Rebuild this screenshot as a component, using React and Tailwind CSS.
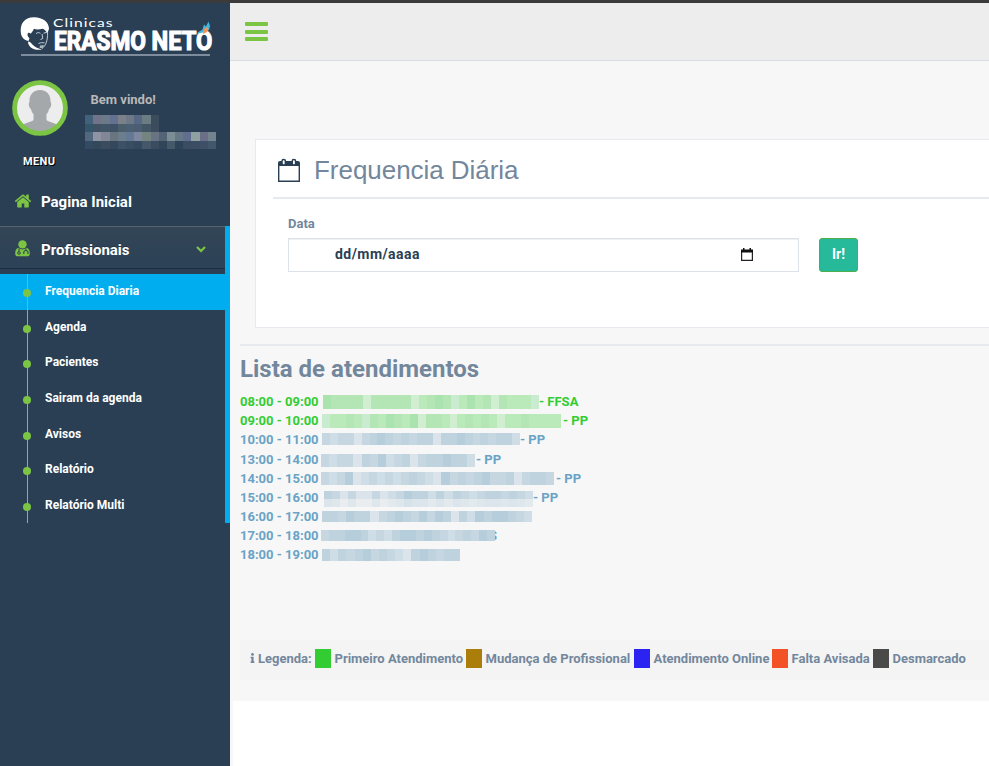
import React from "react";
import { FaInfo } from "react-icons/fa";

const MENU = [
  { label: "Frequencia Diaria", active: true, h: "h-9" },
  { label: "Agenda", h: "h-[35px]" },
  { label: "Pacientes", h: "h-9" },
  { label: "Sairam da agenda", h: "h-9" },
  { label: "Avisos", h: "h-[35px]" },
  { label: "Relatório", h: "h-9" },
  { label: "Relatório Multi", h: "h-[35px]" },
];

// Mosaic shades, light to dark; each row lists its cells as indexes into them.
const GREENS = ["#d2eed0", "#c9ecd0", "#bae9ba", "#b4e6b5", "#abe3ae"];
const BLUES = ["#dbe4ea", "#cfdee6", "#c6d7e1", "#bfd3df", "#b6cedb"];

const ROWS = [
  { time: "08:00 - 09:00", green: true, h: "h-[19px]", bar: "ml-[5px] mt-[3px] w-[216px] h-[14px]", cells: "433330333330234312423032221", end: "- FFSA", gap: "" },
  { time: "09:00 - 10:00", green: true, h: "h-[19px]", bar: "ml-1 mt-[3px] w-[239px] h-[14px]", cells: "122321324324033202323202232222", end: "- PP", gap: "pl-[2px]" },
  { time: "10:00 - 11:00", h: "h-5", bar: "ml-1 mt-[3px] w-[198px] h-3", cells: "2122023432323303343232331", end: "- PP", gap: "" },
  { time: "13:00 - 14:00", h: "h-[19px]", bar: "ml-[3px] mt-1 w-[154px] h-[13px]", cells: "2122032412302334331", end: "- PP", gap: "pl-[1px]" },
  { time: "14:00 - 15:00", h: "h-[19px]", bar: "ml-[3px] mt-[3px] w-[233px] h-[13px]", cells: "21240121212321042323422302332", end: "- PP", gap: "pl-[2px]" },
  { time: "15:00 - 16:00", h: "h-[19px]", bar: "ml-[6px] mt-[3px] w-[209px] h-4", cells: "32020020124331313212332321", end: "- PP", gap: "", double: true },
  { time: "16:00 - 17:00", h: "h-[19px]", bar: "ml-1 mt-1 w-[210px] h-[11px]", cells: "33243302343242430314344321" },
  { time: "17:00 - 18:00", h: "h-[19px]", bar: "ml-[3px] mt-1 w-[174px] h-[11px]", cells: "2334431213443432123243", tail: true },
  { time: "18:00 - 19:00", h: "h-[19px]", bar: "ml-1 mt-1 w-[138px] h-3", cells: "31323423210343233" },
];

const USER_MOSAIC = [
  { h: "h-[9px]", c: ["#41627a", "#717488", "#6b7a89", "#637191", "#7b8089", "#6d7986", "#576885", "#6b7c84", "#3b4c5d"] },
  { h: "h-2", c: ["#34556a", "#3f5163", "#415569", "#405166", "#4b5e6c", "#4c6073", "#4b5d73", "#435666", "#3c4c5e"] },
  { h: "h-[9px]", c: ["#52687e", "#8e94a3", "#828797", "#69757f", "#6c7d8b", "#667994", "#7d88a0", "#74847f", "#687384", "#536477", "#7d8d95", "#677887", "#626e8f", "#90a1a2", "#6b6f87", "#74848f"] },
  { h: "h-2", c: ["#324a62", "#34485c", "#3a4c5e", "#34475b", "#3c5066", "#384c62", "#34485f", "#44586a", "#3a4c60", "#30455a", "#445a6a", "#2d4358", "#394c62", "#3b4d62", "#3e5067", "#42566c"] },
];

const LEGEND = [
  ["bg-[#32cd32]", "Primeiro Atendimento", "w-[129px]"],
  ["bg-[#ab7e0b]", "Mudança de Profissional", "w-[146px]"],
  ["bg-[#2a23f1]", "Atendimento Online", "w-[116px]"],
  ["bg-[#f25226]", "Falta Avisada", "w-[79px]"],
  ["bg-[#4a4a48]", "Desmarcado", "w-[74px]"],
];

function Logo() {
  return (
    <svg width="230" height="60" viewBox="0 3 230 60" className="block shrink-0">
      <path d="M21 34C19.500 24 24 17.200 34 17.200c9 0 15 5 15 11.500l-1.500 4.500c-2-2.500-3-4-5-4.500-3 .8-6 1.300-8.500 0-1 2.300-2 3.500-3.500 5-1-1.500-3-1-3 1 0 1.500 1 2.500 2 3.500l-1 2.800-2-.5c-2-1-4.500-2.500-5.500-6.500z" fill="#fff" />
      <path d="M30 42c3 3 5 6 12 7.500-8 1.500-14-2.500-14-8z" fill="#fff" />
      <path d="M36 33.500c2-1.200 3-1 4.500-.2M43.500 33.200l3.500-.9M42 34l.8 4.500-2.300 1M38.500 43.500c2.500-1 4-1 6-.6M47.600 33c0 7-1.500 12.500-5.500 15.500" fill="none" stroke="#c3ced8" strokeWidth="1" />
      <path d="M40 45.500l4-.4-1.500 3.300-3-.6z" fill="#a9b6c2" />
      <text transform="translate(53 27) scale(1.300 1)" fontSize="12" fill="#fff" textLength="45.800" lengthAdjust="spacing" fontFamily="Lato, sans-serif">Clinicas</text>
      <text transform="translate(54 50) scale(.8 1)" fontSize="26" fontWeight="700" fill="#fff" stroke="#fff" strokeWidth="1.200" textLength="115" lengthAdjust="spacingAndGlyphs" fontFamily="Roboto, sans-serif">ERASMO</text>
      <text transform="translate(151.500 50) scale(.8 1)" fontSize="26" fontWeight="700" fill="#fff" stroke="#fff" strokeWidth="1.200" textLength="76" lengthAdjust="spacingAndGlyphs" fontFamily="Roboto, sans-serif">NETO</text>
      <path d="M196.500 33.500l6-4 1.500-5 2 2 2.500-5 1.500 4.500-1 4-5 2-3 1z" fill="#44b6e4" />
      <path d="M202.500 34l2-5.500 2.500-1.500 1.500 2-1.500 3-3 1.500z" fill="#f39558" />
      <path d="M21 55h189" stroke="#9aa8b6" strokeWidth="1.500" />
    </svg>
  );
}

function HomeIcon() {
  return (
    <svg width="18" height="18" viewBox="0 0 1792 1792" fill="#7cc544" className="mt-[1px] shrink-0">
      <path d="M1472 992v480q0 26-19 45t-45 19h-384v-384h-256v384h-384q-26 0-45-19t-19-45v-480q0-1 .5-3t.5-3l575-474 575 474q1 2 1 6zm223-69l-62 74q-8 9-21 11h-3q-13 0-21-7l-692-577-692 577q-12 8-24 7-13-2-21-11l-62-74q-8-10-7-23.500t11-21.500l719-599q32-26 76-26t76 26l244 204v-195q0-14 9-23t23-9h192q14 0 23 9t9 23v408l219 182q10 8 11 21.500t-7 23.500z" />
    </svg>
  );
}

function DoctorIcon() {
  return (
    <svg width="16" height="17" viewBox="0 0 16 17" className="shrink-0">
      <circle cx="7.500" cy="4.400" r="4.200" fill="#7cc544" />
      <path d="M3.600 7.800C1 8.500.2 10.500.2 13.500c0 2 1 2.800 2.600 2.800h9.400c1.600 0 2.600-.8 2.600-2.800 0-3-.8-5-3.400-5.700-2 2.100-5.800 2.100-7.800 0z" fill="#7cc544" />
      <path d="M4 8.500v3.500M11 8.500v2M8.800 14v-1.500c0-2.600 4.200-2.600 4.200 0V14" fill="none" stroke="#2f4356" strokeWidth="1.100" />
      <circle cx="4" cy="13" r="1.300" fill="#7cc544" stroke="#2f4356" strokeWidth="1" />
    </svg>
  );
}

function Sidebar() {
  return (
    <aside className="flex w-[230px] shrink-0 flex-col bg-[#2a3f54]">
      <Logo />
      <div className="flex h-[87px]">
        <svg width="56" height="56" viewBox="0 0 56 56" className="ml-3 mt-[17px] shrink-0">
          <circle cx="28" cy="28" r="25.500" fill="#ededed" />
          <path d="M28 10c-7 0-11 5-10.500 12-1.500 1-.5 6 1.500 7 .5 2 1 4 2.500 5v6c-2 2-7 2-10.500 5 9 10 25 10 34 0-3.500-3-8.500-3-10.500-5v-6c1.500-1 2-3 2.500-5 2-1 3-6 1.500-7C39 15 35 10 28 10z" fill="#a4a8ab" />
          <circle cx="28" cy="28" r="25.400" fill="none" stroke="#7cc544" strokeWidth="4.800" />
        </svg>
        <div className="ml-[17px] mt-[27px]">
          <div className="ml-[5.500px] h-[25px] text-[13px] font-bold leading-[20px] text-[#bab8b8]">Bem vindo!</div>
          {USER_MOSAIC.map((r, i) => (
            <div key={i} className={"flex " + r.h}>
              {r.c.map((c, j) => (
                <span key={j} className="w-[8.2px]" style={{ backgroundColor: c }} />
              ))}
            </div>
          ))}
        </div>
      </div>
      <div className="ml-[23px] mt-1 h-[15px] text-[11px] font-bold leading-[16px] tracking-[0.4px] text-white [text-shadow:1px_1px_#000]">MENU</div>
      <div className="mt-[10px] flex h-[47px] items-start pl-[14px] pt-3 text-[15px] font-bold leading-[22px] text-white">
        <HomeIcon />
        <span className="ml-[9px]">Pagina Inicial</span>
      </div>
      <div className="h-[297px] border-r-[5px] border-[#00aeef]">
        <div className="flex h-[43px] items-center border-b border-t border-b-[#1f2d40] border-t-[#53636f] bg-linear-to-b from-[#334556] to-[#2c4257] pl-[15px] pr-[18px] text-[15px] font-bold text-white [text-shadow:0_-1px_rgba(0,0,0,.25)]">
          <span className="pt-[2px]"><DoctorIcon /></span>
          <span className="ml-[10px] pt-[5px]">Profissionais</span>
          <svg width="12" height="10" viewBox="0 0 12 10" className="ml-auto mt-1">
            <path d="M2 2l4 4 4-4" fill="none" stroke="#7cc544" strokeWidth="2.200" />
          </svg>
        </div>
        <ul className="mt-[5px]">
          {MENU.map((m) => (
            <li key={m.label} className={"flex " + m.h + (m.active ? " bg-[#00aeef]" : "")}>
              <span className="ml-[23px] flex w-2 justify-center">
                <span className="flex w-px items-start justify-center bg-[#7cc544]">
                  <span className="mt-[15px] size-2 shrink-0 rounded-full bg-[#7cc544]" />
                </span>
              </span>
              <span className="ml-[14px] pt-2 text-[12px] font-bold leading-[18px] text-white">{m.label}</span>
            </li>
          ))}
        </ul>
      </div>
    </aside>
  );
}

function Attendance({ row }) {
  const palette = row.green ? GREENS : BLUES;
  const cells = [...row.cells].map((n) => palette[Number(n)]);
  return (
    <div className={"flex whitespace-nowrap text-[13px] font-bold leading-[19px] " + row.h + (row.green ? " text-[#32cd32]" : " text-[#6aa3c5]")}>
      <span className="w-[78px] shrink-0">{row.time}</span>
      <span className={"flex shrink-0 flex-col " + row.bar}>
        <span className="flex flex-1">
          {cells.map((c, i) => (
            <span key={i} className="flex-1" style={{ backgroundColor: c }} />
          ))}
        </span>
        {row.double && (
          <span className="flex flex-1">
            {cells.map((c, i) => (
              <span key={i} className="flex-1 opacity-50" style={{ backgroundColor: c }} />
            ))}
          </span>
        )}
      </span>
      {row.end && <span className={row.gap}>{row.end}</span>}
      {row.tail && <span className="flex w-[2px] justify-end overflow-hidden">S</span>}
    </div>
  );
}

export default function App() {
  return (
    <div className="flex h-[766px] w-[989px] flex-col overflow-hidden bg-white font-[Roboto,sans-serif]">
      <div className="h-[3px] shrink-0 bg-[#3b3b3b]" />
      <div className="flex min-h-0 flex-1">
        <Sidebar />
        <main className="flex min-w-0 flex-1 flex-col text-[#73879c]">
          <header className="flex h-[58px] shrink-0 border-b border-[#d9dee4] bg-[#ededed] pl-[15px] pt-[19px]">
            <div className="flex w-[23px] flex-col gap-[3.500px]">
              <span className="h-1 rounded-[1px] bg-[#7cc544]" />
              <span className="h-1 rounded-[1px] bg-[#7cc544]" />
              <span className="h-1 rounded-[1px] bg-[#7cc544]" />
            </div>
          </header>
          <div className="flex h-[640px] shrink-0 flex-col bg-[#f7f7f7] pl-[10px]">
            <section className="ml-[15px] mt-[78px] h-[189px] shrink-0 border-y border-l border-[#e6e9ed] bg-white pl-[17px]">
              <div className="flex h-[59px] border-b-2 border-[#e6e9ed] pl-[5px] pt-[13px]">
                <svg width="22" height="30" viewBox="0 0 22 30" className="mt-[1px]">
                  <path d="M.7 11h20.600v16.300H.7z" fill="none" stroke="#2a3f54" strokeWidth="1.400" />
                  <path d="M0 9q0-2 2-2h18q2 0 2 2v3H0z" fill="#2a3f54" />
                  <rect x="4" y="5.600" width="3.400" height="5.500" rx="1.600" fill="#fff" stroke="#2a3f54" strokeWidth="1.500" />
                  <rect x="14.200" y="5.600" width="3.400" height="5.500" rx="1.600" fill="#fff" stroke="#2a3f54" strokeWidth="1.500" />
                </svg>
                <h1 className="ml-[14px] whitespace-nowrap font-['Liberation_Sans',Arial,sans-serif] text-[26px] leading-[34px] tracking-[-0.04px]">Frequencia Diária</h1>
              </div>
              <div className="ml-[15px] mt-[16px] text-[13px] font-bold leading-[18px]">Data</div>
              <div className="ml-[15px] mt-[5px] flex">
                <div className="flex h-[34px] w-[511px] items-start border border-[#dde2e8] pl-[46px] pt-[5px] shadow-[inset_0_1px_0_#f0f0f0]">
                  <span className="text-[14px] font-bold leading-[20px] tracking-[0.45px] text-[#2a3f54]">dd/mm/aaaa</span>
                  <svg width="12" height="13" viewBox="0 0 12 13" className="ml-auto mr-[45px] mt-1">
                    <path d="M.6 3h10.800v9.400H.6z" fill="none" stroke="#222" strokeWidth="1.200" />
                    <path d="M0 1.500h12V4.500H0zM2 0h1.500v2H2zM8.500 0H10v2H8.500z" fill="#111" />
                  </svg>
                </div>
                <button className="ml-5 flex h-[34px] w-[39px] justify-center rounded-[3px] border border-[#4cae4c] bg-[#26b99a] pt-[5px] text-[14px] font-bold leading-[20px] text-white">Ir!</button>
              </div>
            </section>
            <div className="mt-4 h-[2px] shrink-0 bg-[#e6e9ed]" />
            <h2 className="mt-[8px] h-[38px] shrink-0 text-[24px] font-bold leading-[30px]">Lista de atendimentos</h2>
            <div className="h-[248px] shrink-0">
              {ROWS.map((r) => (
                <Attendance key={r.time} row={r} />
              ))}
            </div>
            <div className="flex h-10 shrink-0 items-start whitespace-nowrap bg-[#f4f4f4] pl-[10px] pt-[9px] text-[13px] font-bold leading-[19px]">
              <FaInfo className="mt-1 h-[10px] w-[5px]" />
              <span className="ml-[3px] w-[57px]">Legenda:</span>
              {LEGEND.map(([color, label, width]) => (
                <React.Fragment key={label}>
                  <span className={"h-[19px] w-4 shrink-0 " + color} />
                  <span className={"ml-[3.500px] mr-[2.500px] shrink-0 " + width}>{label}</span>
                </React.Fragment>
              ))}
            </div>
          </div>
          <div className="flex-1 border-l-[3px] border-[#f7f7f7] bg-white" />
        </main>
      </div>
    </div>
  );
}
